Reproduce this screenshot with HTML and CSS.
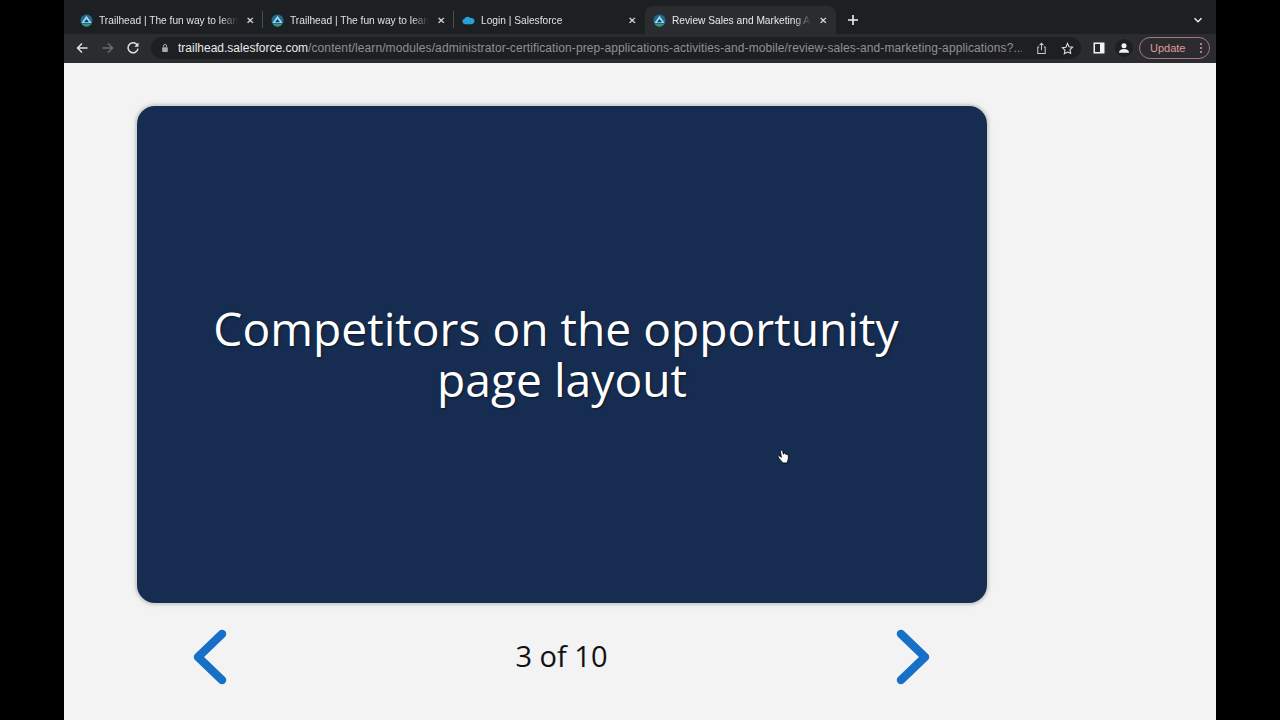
FILE: index.html
```html
<!DOCTYPE html>
<html lang="en">
  <head>
    <meta charset="UTF-8" />
    <title>Review Sales and Marketing Applications</title>
    <link rel="stylesheet" href="styles.css">
  </head>
  <body>
    <div class="screen">
      <div class="tabstrip">
        <div class="tab">
          <svg class="favicon" viewBox="0 0 14 14"><circle cx="7" cy="7" r="6.500" fill="#1c6e8f"/><path d="M1.500 9.800 7 2 12.500 9.800z" fill="#a6d4f0"/><path d="M4.400 9 7 5.300 9.600 9z" fill="#17375e"/><path d="M2 10.800h10a5.800 5.800 0 0 1-10 0z" fill="#2e9b6c"/></svg>
          <span class="tab-title">Trailhead | The fun way to learn</span>
          <span class="tab-close">✕</span>
        </div>
        <div class="tab">
          <svg class="favicon" viewBox="0 0 14 14"><circle cx="7" cy="7" r="6.500" fill="#1c6e8f"/><path d="M1.500 9.800 7 2 12.500 9.800z" fill="#a6d4f0"/><path d="M4.400 9 7 5.300 9.600 9z" fill="#17375e"/><path d="M2 10.800h10a5.800 5.800 0 0 1-10 0z" fill="#2e9b6c"/></svg>
          <span class="tab-title">Trailhead | The fun way to learn</span>
          <span class="tab-close">✕</span>
        </div>
        <div class="tab">
          <svg class="favicon" viewBox="0 0 14 14"><path d="M3.500 11C1.500 11 .5 9.600.5 8.200.5 6.800 1.300 5.800 2.500 5.500 3.200 3.900 4.500 3 6 3c1.200 0 2.200.5 2.800 1.300C11.500 3.700 13.500 5.400 13.500 7.500S11.800 11 10 11z" fill="#2a9fd8"/></svg>
          <span class="tab-title">Login | Salesforce</span>
          <span class="tab-close">✕</span>
        </div>
        <div class="tab tab-active">
          <svg class="favicon" viewBox="0 0 14 14"><circle cx="7" cy="7" r="6.500" fill="#1c6e8f"/><path d="M1.500 9.800 7 2 12.500 9.800z" fill="#a6d4f0"/><path d="M4.400 9 7 5.300 9.600 9z" fill="#17375e"/><path d="M2 10.800h10a5.800 5.800 0 0 1-10 0z" fill="#2e9b6c"/></svg>
          <span class="tab-title">Review Sales and Marketing Applications</span>
          <span class="tab-close">✕</span>
        </div>
        <svg class="new-tab" viewBox="0 0 12 12"><path d="M6 1v10M1 6h10" stroke="#f1f3f4" stroke-width="1.600" fill="none"/></svg>
        <svg class="tab-menu" viewBox="0 0 10 10"><path d="M1.500 3.200 5 6.700l3.500-3.500" stroke="#e8eaed" stroke-width="1.500" fill="none"/></svg>
      </div>

      <div class="toolbar">
        <div class="nav-buttons">
          <svg viewBox="0 0 14 14"><path d="M12.500 7h-10M7 2.500 2.500 7 7 11.500" stroke="#dfe1e4" stroke-width="1.500" fill="none"/></svg>
          <svg viewBox="0 0 14 14"><path d="M1.500 7h10M7 2.500 11.500 7 7 11.500" stroke="#6a6d70" stroke-width="1.500" fill="none"/></svg>
          <svg viewBox="0 0 14 14"><path d="M11.500 4.500A5 5 0 1 0 12 7.500" stroke="#dfe1e4" stroke-width="1.500" fill="none"/><path d="M12.500 1.500v4.200H8.300z" fill="#dfe1e4"/></svg>
        </div>
        <div class="omnibox">
          <svg class="lock" viewBox="0 0 10 12"><path d="M3 5V3.500a2 2 0 0 1 4 0V5" stroke="#a9abae" stroke-width="1.200" fill="none"/><rect x="1.500" y="5" width="7" height="6" rx="1" fill="#a9abae"/></svg>
          <span class="url"><span class="url-host">trailhead.salesforce.com</span>/content/learn/modules/administrator-certification-prep-applications-activities-and-mobile/review-sales-and-marketing-applications?...</span>
          <svg class="omni-icon" viewBox="0 0 14 14"><path d="M4.500 5.500H3v7h8v-7H9.500M7 9V1.500M4.800 3.500 7 1.300l2.200 2.200" stroke="#c8cacd" stroke-width="1.100" fill="none"/></svg>
          <svg class="omni-icon" viewBox="0 0 14 14"><path d="m7 1.500 1.700 3.600 3.800.5-2.800 2.700.7 3.900L7 10.800l-3.400 1.900.7-3.900-2.800-2.700 3.800-.5z" stroke="#dcdee0" stroke-width="1.200" fill="none"/></svg>
        </div>
        <svg class="side-panel" viewBox="0 0 12 12"><rect x=".5" y=".5" width="11" height="11" fill="#f1f3f4"/><rect x="2" y="2" width="5" height="8" fill="#26282b"/></svg>
        <div class="avatar">
          <svg viewBox="0 0 12 12"><circle cx="6" cy="3.800" r="2.500" fill="#f1f3f4"/><path d="M1 10.800c0-2.600 2.200-3.800 5-3.800s5 1.200 5 3.800z" fill="#f1f3f4"/></svg>
        </div>
        <div class="update-pill">
          <span>Update</span>
          <span class="update-dots"><i></i><i></i><i></i></span>
        </div>
      </div>

      <main class="stage">
        <section class="slide-card">
          <h1><span class="title-first">Competitors on the opportunity</span> page layout</h1>
        </section>
        <div class="pager">
          <svg class="arrow" viewBox="0 0 34 56"><path d="M29 5 5 28l24 23" stroke="#1670c8" stroke-width="8.500" stroke-linecap="round" stroke-linejoin="round" fill="none"/></svg>
          <span class="pager-count">3 of 10</span>
          <svg class="arrow" viewBox="0 0 34 56"><path d="m5 5 24 23L5 51" stroke="#1670c8" stroke-width="8.500" stroke-linecap="round" stroke-linejoin="round" fill="none"/></svg>
        </div>
        <svg class="hand-cursor" viewBox="0 0 14 16"><path d="M4 1.500c.7-.5 1.500 0 1.700.8l.7 3 .2-.9c.5-.6 1.300-.4 1.500.3l.2.500c.5-.5 1.300-.3 1.500.4.600-.3 1.300 0 1.400.7.300 2 .2 3.700-.5 5.700-.2.700-.5 1.200-.5 1.900H5.600c-.4-1.200-1.300-2-2.300-3L1.200 8.200c-.5-.8.300-1.700 1.200-1.200l2 1.300L3.500 2.900c-.1-.5 0-1.100.5-1.400z" fill="#fff" stroke="#000" stroke-width=".8"/></svg>
      </main>
    </div>
  </body>
</html>
```

FILE: styles.css
```css
html, body {
  margin: 0;
  padding: 0;
  height: 100%;
  background: #000;
  overflow: hidden;
}
.screen {
  width: 1152px;
  height: 720px;
  margin: 0 auto;
  display: flex;
  flex-direction: column;
  font-family: "Liberation Sans", Arial, sans-serif;
}

/* browser tabs */
.tabstrip {
  height: 34px;
  box-sizing: border-box;
  padding: 6px 0 0 8px;
  background: #1d2023;
  display: flex;
  align-items: stretch;
  position: relative;
}
.tab {
  width: 191px;
  box-sizing: border-box;
  padding: 0 7px 0 8px;
  display: flex;
  align-items: center;
  gap: 6px;
  color: #dfe1e4;
  font-size: 10.2px;
  position: relative;
}
.tab:nth-child(1)::after,
.tab:nth-child(2)::after {
  content: "";
  position: absolute;
  right: 0;
  top: 5px;
  height: 17px;
  width: 1px;
  background: #4a4d50;
}
.tab-active {
  background: #2a2c2f;
  border-radius: 8px 8px 0 0;
  color: #e8eaed;
}
.favicon {
  width: 13px;
  height: 13px;
  flex: none;
}
.tab-title {
  flex: 1;
  min-width: 0;
  white-space: nowrap;
  overflow: hidden;
  -webkit-mask-image: linear-gradient(to right, #000 88%, transparent);
  mask-image: linear-gradient(to right, #000 88%, transparent);
}
.tab-close {
  font-size: 10px;
  color: #e8eaed;
  width: 12px;
  text-align: center;
  flex: none;
}
.new-tab {
  width: 12px;
  height: 12px;
  margin: 8px 0 0 11px;
}
.tab-menu {
  width: 10px;
  height: 10px;
  margin: 9px 13px 0 auto;
}

/* address bar */
.toolbar {
  height: 29px;
  background: #2a2c2f;
  display: flex;
  align-items: center;
  padding: 0 6px 1px 0;
  box-sizing: border-box;
}
.nav-buttons {
  display: flex;
  gap: 11.5px;
  padding: 0 11px;
}
.nav-buttons svg {
  width: 14px;
  height: 14px;
}
.omnibox {
  width: 930px;
  height: 22px;
  box-sizing: border-box;
  background: #1d1f22;
  border-radius: 11px;
  padding: 0 7px 0 10px;
  display: flex;
  align-items: center;
  gap: 9px;
  font-size: 12px;
  letter-spacing: .1px;
  color: #8f9194;
}
.lock {
  width: 8px;
  height: 10px;
  flex: none;
}
.url {
  flex: 1;
  min-width: 0;
  white-space: nowrap;
  overflow: hidden;
}
.url-host {
  color: #e8eaed;
  letter-spacing: 0;
}
.omni-icon {
  width: 13px;
  height: 13px;
  flex: none;
  margin-left: 4px;
}
.side-panel {
  width: 12px;
  height: 12px;
  margin-left: 12px;
}
.avatar {
  width: 18px;
  height: 18px;
  border-radius: 50%;
  background: #1d1f22;
  margin-left: 10px;
  display: flex;
  align-items: center;
  justify-content: center;
}
.avatar svg {
  width: 12px;
  height: 12px;
}
.update-pill {
  margin-left: 6px;
  width: 71px;
  height: 22px;
  box-sizing: border-box;
  border: 1px solid #a9777a;
  border-radius: 11px;
  display: flex;
  align-items: center;
  justify-content: space-between;
  padding: 0 7px 0 10px;
  color: #e29a9b;
  font-size: 11px;
}
.update-dots {
  display: flex;
  flex-direction: column;
  gap: 2px;
}
.update-dots i {
  width: 2px;
  height: 2px;
  border-radius: 50%;
  background: #e29a9b;
}

/* slide page */
.stage {
  flex: 1;
  background: #f3f3f3;
  padding: 43px 0 0 73px;
  position: relative;
  font-family: "Open Sans", sans-serif;
}
.slide-card {
  width: 850px;
  height: 497px;
  box-sizing: border-box;
  background: #162c50;
  border-radius: 18px;
  box-shadow: 0 0 2px 2px #d0d1d3, 0 0 4px 3px #e6e6e6;
  display: flex;
  align-items: center;
  justify-content: center;
  text-align: center;
}
.slide-card h1 {
  margin: 0 0 2px;
  width: 760px;
  color: #fff;
  font-weight: 400;
  font-size: 46.2px;
  line-height: 51px;
  text-shadow: 1px 1px 2px rgba(0, 0, 0, 0.45);
}
.title-first {
  padding-right: 12px;
}
.pager {
  width: 850px;
  height: 56px;
  margin-top: 26px;
  display: flex;
  align-items: center;
  justify-content: space-between;
  padding: 0 57px 0 56px;
  box-sizing: border-box;
}
.arrow {
  width: 34px;
  height: 56px;
}
.pager-count {
  font-size: 29px;
  color: #111;
  margin-bottom: 4px;
}
.hand-cursor {
  position: absolute;
  left: 713px;
  top: 386px;
  width: 14px;
  height: 16px;
}
```
